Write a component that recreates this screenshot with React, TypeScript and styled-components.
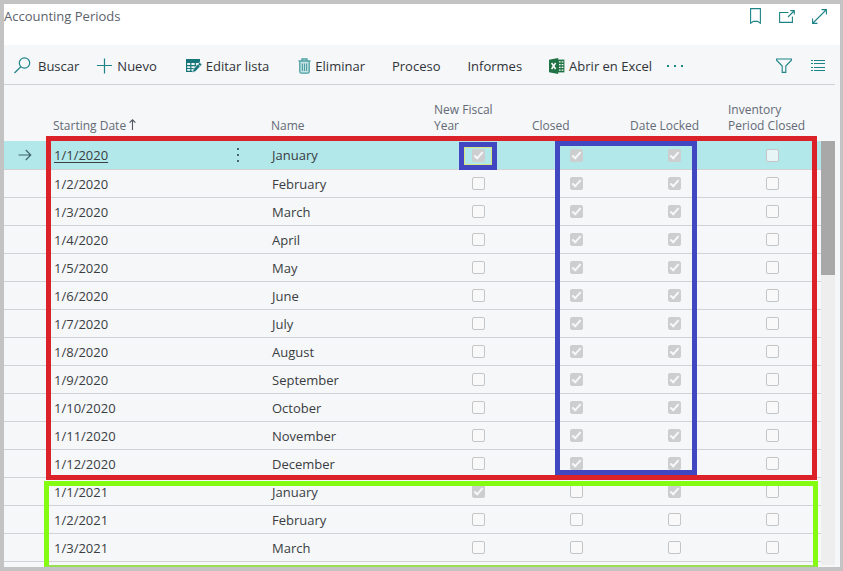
import React from "react";
import styled, { createGlobalStyle, css } from "styled-components";

const teal = "#1f8488";

const GlobalStyle = createGlobalStyle`
  *, *::before, *::after { box-sizing: border-box; }
  body {
    margin: 0;
    background: #c3c3c3;
    font-family: "Open Sans", "Noto Sans", sans-serif;
    color: #3a3d42;
  }
`;

const Page = styled.div`
  display: flex;
  flex-direction: column;
  height: 100vh;
  border: 4px solid #c3c3c3;
  border-right-width: 3px;
  background: #f5f7f9;
`;

const TitleBar = styled.header`
  display: flex;
  flex: none;
  align-items: flex-start;
  justify-content: space-between;
  height: 41px;
  padding-right: 13px;
  background: #ffffff;
`;

const Title = styled.h1`
  margin: 0;
  font-size: 13px;
  font-weight: 400;
  line-height: 24px;
  color: #5c626b;
`;

const WindowActions = styled.div`
  display: flex;
  gap: 16px;
  padding-top: 4px;
`;

const IconButton = styled.button`
  display: flex;
  align-items: center;
  justify-content: center;
  width: 16px;
  height: 16px;
  padding: 0;
  border: 0;
  background: none;
  color: ${teal};
  cursor: pointer;
`;

const Toolbar = styled.nav`
  display: flex;
  flex: none;
  align-items: center;
  height: 40px;
  margin-right: 5px;
  padding: 2px 9px 0 10px;
  border-bottom: 1px solid #d0d1d4;
`;

const ToolButton = styled.button<{ $before?: number; $gap?: number }>`
  display: flex;
  align-items: center;
  gap: ${(p) => p.$gap ?? 4}px;
  height: 32px;
  margin-left: ${(p) => p.$before ?? 27}px;
  padding: 0;
  border: 0;
  background: none;
  font: inherit;
  font-size: 13px;
  line-height: 20px;
  white-space: nowrap;
  color: #303338;
  cursor: pointer;
  svg { flex: none; }
`;

const ToolbarEnd = styled.div`
  display: flex;
  gap: 18px;
  margin-left: auto;
`;

const ListArea = styled.main`
  display: flex;
  flex: 1;
  min-height: 0;
  padding-right: 5px;
`;

const Sheet = styled.div`
  position: relative;
  flex: 1;
  overflow: hidden;
`;

const Scrollbar = styled.div`
  flex: none;
  width: 14px;
  margin: 56px 0 2px;
  background: #eeeeee;
`;

const Thumb = styled.div`
  height: 134px;
  background: #a8a8a8;
`;

const Table = styled.table`
  width: 100%;
  table-layout: fixed;
  border-collapse: separate;
  border-spacing: 0;
`;

const Column = styled.col<{ $width?: number }>`
  ${(p) => p.$width && css`width: ${p.$width}px;`}
`;

const HeadCell = styled.th`
  height: 56px;
  padding: 0 0 7px 5px;
  vertical-align: bottom;
  text-align: left;
  font-size: 12px;
  font-weight: 400;
  line-height: 16px;
  white-space: nowrap;
  color: #646a76;
`;

const Row = styled.tr<{ $selected?: boolean }>`
  height: ${(p) => (p.$selected ? 29 : 28)}px;
  background: ${(p) => (p.$selected ? "#b2e8ea" : "transparent")};
`;

const Cell = styled.td`
  padding: 0 0 0 6px;
  border-bottom: 1px solid #d0d2d7;
  font-size: 13px;
  line-height: 20px;
`;

const MarkerCell = styled(Cell)`
  padding-left: 14px;
  svg { display: block; }
`;

const CheckCell = styled(Cell)`
  padding-left: 43px;
`;

const DateLine = styled.div`
  display: flex;
  align-items: center;
  justify-content: space-between;
  padding-right: 19px;
`;

const DateLink = styled.a`
  color: inherit;
  text-decoration: underline;
  text-underline-offset: 2px;
`;

const MoreButton = styled(IconButton)`
  color: #45666b;
`;

const Check = styled.input`
  appearance: none;
  display: block;
  width: 13px;
  height: 13px;
  margin: 0;
  border: 1px solid #c4c5c7;
  border-radius: 2px;
  background: rgba(250, 250, 250, 0.75);
  &:checked {
    border-color: #cdcecf;
    background: #cdcecf;
  }
  &:checked::after {
    content: "";
    display: block;
    width: 5px;
    height: 9px;
    margin: 0 0 0 3px;
    border: solid #f7f8f9;
    border-width: 0 2px 2px 0;
    transform: rotate(42deg);
  }
`;

const Highlight = styled.div`
  position: absolute;
  pointer-events: none;
  border: 5px solid;
`;

const ClosedYearFrame = styled(Highlight)`
  top: 51px;
  left: 42px;
  right: 4px;
  height: 344px;
  border-color: #dc2229;
`;

const OpenYearFrame = styled(Highlight)`
  top: 396px;
  left: 40px;
  right: 3px;
  bottom: 0;
  border-color: #86fb12;
  border-bottom: 2px solid #98e052;
`;

const LockedFrame = styled(Highlight)`
  top: 56px;
  right: 124px;
  width: 142px;
  height: 334px;
  border-color: #4147c0;
`;

const FiscalStartFrame = styled(Highlight)`
  top: 57px;
  right: 324px;
  width: 38px;
  height: 28px;
  border-color: #4147c0;
  box-shadow: inset 0 0 0 1px #d9e67f;
`;

const SearchIcon = () => (
  <svg width="17" height="17" viewBox="0 0 17 17" fill="none" stroke={teal} strokeWidth="1.2">
    <circle cx="10.5" cy="6" r="5.2" />
    <path d="M6.8 9.8 0.5 16" />
  </svg>
);
const PlusIcon = () => (
  <svg width="16" height="16" viewBox="0 0 16 16" stroke={teal} strokeWidth="1.2">
    <path d="M7.5 0.5v15M0 7.5h15" />
  </svg>
);
const EditListIcon = () => (
  <svg width="16" height="14" viewBox="0 0 16 14" fill="none">
    <path d="M0 0h14v4H0z" fill="#157579" />
    <path d="M.6 3v9.4H7M4.8 4v8.4M9.3 4v5M.6 6.6h11M.6 9.5h8" stroke="#157579" strokeWidth="1.2" />
    <path d="M13.6 3.2 16 5.4l-6.2 6.8-3.3 1.6.8-3.6z" fill="#157579" stroke="#f5f7f9" strokeWidth=".7" />
    <path d="m12.2 5.5 1.9 1.8" stroke="#f5f7f9" strokeWidth=".7" />
  </svg>
);
const TrashIcon = () => (
  <svg width="13" height="16" viewBox="0 0 13 16" fill="none" stroke="#4b9fa2">
    <path d="M1.8 3.5v10.2q0 1.5 1.5 1.5h6.4q1.5 0 1.5-1.5V3.5" fill="#c6e3e4" strokeWidth="1.3" />
    <path d="M.5 3h12M4 2.6V1h5v1.6" strokeWidth="1.3" />
    <path d="M4.4 5.5v7.4M6.5 5.5v7.4M8.6 5.5v7.4" strokeWidth="1.1" />
  </svg>
);
const ExcelIcon = () => (
  <svg width="16" height="16" viewBox="0 0 16 16" fill="none">
    <path d="M0 1.7 9.2 0v16L0 14.3z" fill="#217346" />
    <path d="M9 1.6h6.4v12.8H9z" fill="#217346" />
    <path d="M10 3.8h1.6M12.6 3.8h1.8M10 6.6h1.6M12.6 6.6h1.8M10 9.4h1.6M12.6 9.4h1.8M10 12.2h1.6M12.6 12.2h1.8" stroke="#f5f7f9" strokeWidth="1.3" />
    <path d="m2.6 5 4 6M6.6 5l-4 6" stroke="#fff" strokeWidth="1.5" />
  </svg>
);
const DotsIcon = () => (
  <svg width="16" height="4" viewBox="0 0 16 4" fill={teal}>
    <path d="M0 1h2v2H0zM7 1h2v2H7zM14 1h2v2h-2z" />
  </svg>
);
const FilterIcon = () => (
  <svg width="16" height="15" viewBox="0 0 16 15" fill="none" stroke={teal} strokeWidth="1.1">
    <path d="M.6 1h14.8v1.2L9.8 8v6.4H6.2V8L.6 2.2z" />
  </svg>
);
const ListIcon = () => (
  <svg width="14" height="12" viewBox="0 0 14 12" stroke={teal}>
    <path d="M0 .5h2M3 .5h11M0 3.5h2M3 3.5h11M0 7.5h2M3 7.5h11M0 10.5h2M3 10.5h11" />
  </svg>
);
const BookmarkIcon = () => (
  <svg width="11" height="16" viewBox="0 0 11 16" fill="none" stroke={teal} strokeWidth="1.1">
    <path d="M.6.6h9.8v14.7L7.6 13.4H3.4L.6 15.3z" />
  </svg>
);
const PopOutIcon = () => (
  <svg width="16" height="13" viewBox="0 0 16 13" fill="none" stroke={teal} strokeWidth="1.1">
    <path d="M9.5 2.5H.6v9.9h12.8V6.5M9 7l6-6M11.3.6h4v4" />
  </svg>
);
const ExpandIcon = () => (
  <svg width="15" height="15" viewBox="0 0 15 15" fill="none" stroke={teal} strokeWidth="1.1">
    <path d="M1 14 14 1M9.5.6h4.9v4.9M.6 9.5v4.9h4.9" />
  </svg>
);
const RowArrow = () => (
  <svg width="14" height="12" viewBox="0 0 14 12" fill="none" stroke="#3f6266" strokeWidth="1.1">
    <path d="M.5 6h12.3M7.8 1l5 5-5 5" />
  </svg>
);
const MoreIcon = () => (
  <svg width="4" height="14" viewBox="0 0 4 14" fill="currentColor">
    <path d="M0 0h2v2H0zM0 6h2v2H0zM0 12h2v2H0z" />
  </svg>
);
const SortIcon = () => (
  <svg width="7" height="11" viewBox="0 0 7 11" fill="none" stroke="#50555e" strokeWidth="1.1">
    <path d="M3.5 11V.8M.6 3.7 3.5.8l2.9 2.9" />
  </svg>
);

const months = [
  "January", "February", "March", "April", "May", "June",
  "July", "August", "September", "October", "November", "December",
];

const periods = [
  ...months.map((name, i) => ({
    date: `1/${i + 1}/2020`,
    name,
    flags: [i === 0, true, true, false],
  })),
  { date: "1/1/2021", name: "January", flags: [true, false, true, false] },
  { date: "1/2/2021", name: "February", flags: [false, false, false, false] },
  { date: "1/3/2021", name: "March", flags: [false, false, false, false] },
];

const flagNames = ["New Fiscal Year", "Closed", "Date Locked", "Inventory Period Closed"];

export default function App() {
  return (
    <>
      <GlobalStyle />
      <Page>
        <TitleBar>
          <Title>Accounting Periods</Title>
          <WindowActions>
            <IconButton aria-label="Bookmark"><BookmarkIcon /></IconButton>
            <IconButton aria-label="Open in new window"><PopOutIcon /></IconButton>
            <IconButton aria-label="Expand"><ExpandIcon /></IconButton>
          </WindowActions>
        </TitleBar>
        <Toolbar>
          <ToolButton $before={0} $gap={7}><SearchIcon />Buscar</ToolButton>
          <ToolButton $before={18}><PlusIcon />Nuevo</ToolButton>
          <ToolButton $before={29}><EditListIcon />Editar lista</ToolButton>
          <ToolButton $before={29}><TrashIcon />Eliminar</ToolButton>
          <ToolButton>Proceso</ToolButton>
          <ToolButton>Informes</ToolButton>
          <ToolButton><ExcelIcon />Abrir en Excel</ToolButton>
          <ToolButton $before={15} aria-label="More options"><DotsIcon /></ToolButton>
          <ToolbarEnd>
            <IconButton aria-label="Filter"><FilterIcon /></IconButton>
            <IconButton aria-label="List view"><ListIcon /></IconButton>
          </ToolbarEnd>
        </Toolbar>
        <ListArea>
          <Sheet>
            <Table>
              <colgroup>
                <Column $width={44} />
                <Column $width={218} />
                <Column />
                <Column $width={98} />
                <Column $width={98} />
                <Column $width={98} />
                <Column $width={98} />
              </colgroup>
              <thead>
                <tr>
                  <HeadCell aria-label="Current row" />
                  <HeadCell aria-sort="ascending">Starting Date <SortIcon /></HeadCell>
                  <HeadCell>Name</HeadCell>
                  <HeadCell>New Fiscal<br />Year</HeadCell>
                  <HeadCell>Closed</HeadCell>
                  <HeadCell>Date Locked</HeadCell>
                  <HeadCell>Inventory<br />Period Closed</HeadCell>
                </tr>
              </thead>
              <tbody>
                {periods.map((period, index) => (
                  <Row key={period.date} $selected={index === 0}>
                    <MarkerCell>{index === 0 && <RowArrow />}</MarkerCell>
                    <Cell>
                      {index === 0 ? (
                        <DateLine>
                          <DateLink href="#period">{period.date}</DateLink>
                          <MoreButton aria-label="Row options"><MoreIcon /></MoreButton>
                        </DateLine>
                      ) : (
                        period.date
                      )}
                    </Cell>
                    <Cell>{period.name}</Cell>
                    {period.flags.map((flag, i) => (
                      <CheckCell key={flagNames[i]}>
                        <Check
                          type="checkbox"
                          checked={flag}
                          disabled
                          readOnly
                          aria-label={`${flagNames[i]}, ${period.date}`}
                        />
                      </CheckCell>
                    ))}
                  </Row>
                ))}
              </tbody>
            </Table>
            <ClosedYearFrame />
            <OpenYearFrame />
            <LockedFrame />
            <FiscalStartFrame />
          </Sheet>
          <Scrollbar>
            <Thumb />
          </Scrollbar>
        </ListArea>
      </Page>
    </>
  );
}
